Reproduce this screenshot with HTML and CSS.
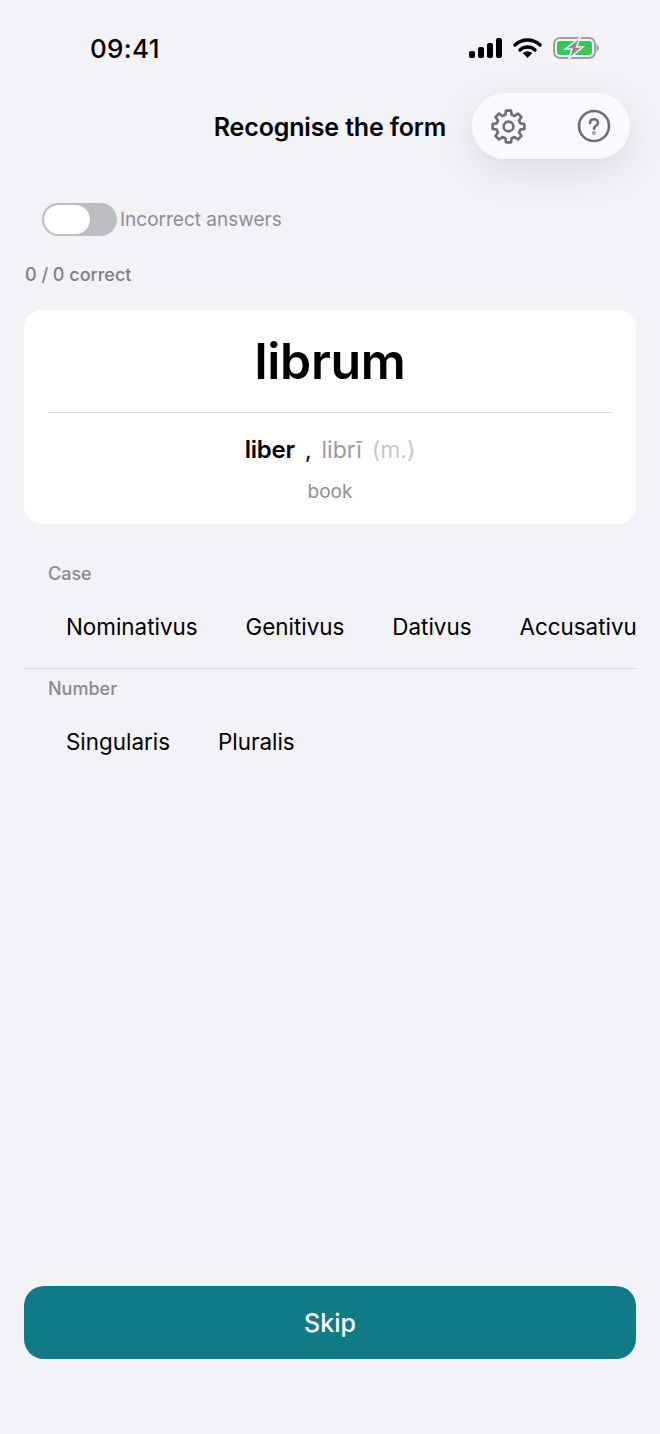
FILE: index.html
```html
<!DOCTYPE html>
<html>
<head>
	<title>Recognise the form</title>
	<meta charset=utf-8>
	<link rel="stylesheet" href="styles.css">
</head>
<body>
	<div class="status">
		<span class="clock">09:41</span>
		<div class="status-icons">
			<svg width="33" height="20" viewBox="0 0 33 20">
				<rect x="0" y="13" width="6" height="7" rx="2" fill="#000"/>
				<rect x="9" y="9" width="6" height="11" rx="2" fill="#000"/>
				<rect x="18" y="5" width="6" height="15" rx="2" fill="#000"/>
				<rect x="27" y="0" width="6" height="20" rx="2" fill="#000"/>
			</svg>
			<svg width="29" height="20" viewBox="0 0 29 20">
				<path d="M2 7 A18 18 0 0 1 27 7" fill="none" stroke="#000" stroke-width="3.400" stroke-linecap="round"/>
				<path d="M7 12 A11 11 0 0 1 22 12" fill="none" stroke="#000" stroke-width="3.400" stroke-linecap="round"/>
				<path d="M9.800 15 A7 7 0 0 1 19.200 15 L14.500 20 Z" fill="#000"/>
			</svg>
			<svg width="46" height="22" viewBox="0 0 46 22">
				<rect x="1" y="1" width="41" height="20" rx="6" fill="none" stroke="#a0a0a4" stroke-width="2"/>
				<rect x="4" y="4" width="35" height="14" rx="3" fill="#34c759"/>
				<path d="M43.500 7.500 C45 8 46 9.500 46 11 C46 12.500 45 14 43.500 14.500 Z" fill="#a0a0a4"/>
				<path d="M27 .5 L12.500 12 H19 L16 21.500 L30 10 H23.500 Z" fill="#8e8e93" stroke="#f2f2f7" stroke-width="1.500"/>
			</svg>
		</div>
	</div>

	<div class="top">
		<h1>Recognise the form</h1>
		<div class="actions">
			<svg class="gear" width="35" height="35" viewBox="-18 -18 36 36" fill="none" stroke="#6e6e73" stroke-width="2.700" stroke-linejoin="round">
				<path d="M-3.24-12.07L-2.58-16.3L2.58-16.3L3.24-12.07L6.25-10.83L9.7-13.35L13.35-9.7L10.83-6.25L12.07-3.24L16.3-2.58L16.3 2.58L12.07 3.24L10.83 6.25L13.35 9.7L9.7 13.35L6.25 10.83L3.24 12.07L2.58 16.3L-2.58 16.3L-3.24 12.07L-6.25 10.83L-9.7 13.35L-13.35 9.7L-10.83 6.25L-12.07 3.24L-16.3 2.58L-16.3-2.58L-12.07-3.24L-10.83-6.25L-13.35-9.7L-9.7-13.35L-6.25-10.83Z"/>
				<circle r="5"/>
			</svg>
			<svg width="36" height="36" viewBox="0 0 36 36" fill="none" stroke="#6e6e73" stroke-width="2.600" stroke-linecap="round">
				<circle cx="18" cy="18" r="15"/>
				<path d="M14 15c0-2.400 1.800-3.800 4-3.800s4 1.400 4 3.600c0 3-4 3-4 6"/>
				<circle cx="18" cy="25" r=".5"/>
			</svg>
		</div>
	</div>

	<label class="toggle-row">
		<span class="toggle"><span class="knob"></span></span>
		<span class="toggle-label">Incorrect answers</span>
	</label>

	<div class="tally">0 / 0 correct</div>

	<div class="card">
		<div class="word">librum</div>
		<div class="lemma">
			<b>liber</b><span class="comma">,</span><span class="gen">librī</span><span class="gender">(m.)</span>
		</div>
		<div class="meaning">book</div>
	</div>

	<section class="group group-line">
		<div class="group-title">Case</div>
		<div class="options">
			<span>Nominativus</span>
			<span>Genitivus</span>
			<span>Dativus</span>
			<span>Accusativus</span>
		</div>
	</section>
	<section class="group">
		<div class="group-title">Number</div>
		<div class="options">
			<span>Singularis</span>
			<span>Pluralis</span>
		</div>
	</section>

	<button class="skip">Skip</button>
</body>
</html>
```

FILE: styles.css
```css
html, body {
	height: 100%;
}
body {
	margin: 0;
	height: 1434px;
	box-sizing: border-box;
	display: flex;
	flex-direction: column;
	overflow: hidden;
	background: #f2f2f7;
	color: #000;
	font-family: Inter, "Liberation Sans", sans-serif;
}

/* status bar */
.status {
	height: 94px;
	flex: none;
	display: flex;
	justify-content: space-between;
	align-items: flex-start;
	padding: 33px 61px 0 90px;
	box-sizing: border-box;
}
.clock {
	font-size: 26px;
	line-height: 31px;
	font-weight: 550;
	letter-spacing: .3px;
}
.status-icons {
	display: flex;
	align-items: center;
	gap: 11px;
	padding-top: 4px;
}

/* title row */
.top {
	position: relative;
	height: 66px;
	flex: none;
	display: flex;
	align-items: center;
	justify-content: center;
}
h1 {
	margin: 0;
	font-size: 25px;
	font-weight: 575;
	letter-spacing: -.15px;
}
.actions {
	position: absolute;
	left: 472px;
	top: -1px;
	width: 158px;
	height: 66px;
	box-sizing: border-box;
	padding: 0 18px 0 19px;
	display: flex;
	align-items: center;
	justify-content: space-between;
	border-radius: 33px;
	background: #f9f9fe;
	box-shadow: 0 12px 40px rgba(0, 0, 0, .1);
}

/* toggle */
.toggle-row {
	display: flex;
	align-items: center;
	gap: 3px;
	margin: 43px 0 0 42px;
}
.toggle {
	width: 75px;
	height: 33px;
	box-sizing: border-box;
	display: block;
	padding: 2px;
	border-radius: 17px;
	background: #bdbdc2;
}
.knob {
	display: block;
	width: 46px;
	height: 29px;
	border-radius: 15px;
	background: #fff;
}
.toggle-label {
	font-size: 19px;
	color: #8e8e93;
}

.tally {
	margin: 27px 0 0 25px;
	font-size: 18px;
	line-height: 24px;
	font-weight: 500;
	color: #7f7f84;
}

/* word card */
.card {
	margin: 23px 24px 0;
	height: 214px;
	flex: none;
	box-sizing: border-box;
	padding: 0 24px;
	border-radius: 18px;
	background: #fff;
	text-align: center;
}
.word {
	height: 103px;
	box-sizing: border-box;
	padding-top: 20px;
	border-bottom: 1px solid #dcdcde;
	font-size: 50px;
	line-height: 63px;
	font-weight: 600;
	letter-spacing: -.35px;
}
.lemma {
	margin-top: 22px;
	display: flex;
	justify-content: center;
	align-items: baseline;
	font-size: 23px;
	line-height: 30px;
}
.lemma b {
	font-weight: 600;
	font-size: 24px;
	letter-spacing: -.2px;
}
.comma {
	margin-left: 10px;
}
.gen {
	margin-left: 10px;
	color: #9b9b9f;
}
.gender {
	margin-left: 10px;
	color: #c7c7cc;
}
.meaning {
	margin-top: 15px;
	font-size: 19px;
	line-height: 24px;
	color: #8e8e93;
}

/* answer groups */
.group {
	margin: 0 24px;
	overflow: hidden;
}
.card + .group {
	margin-top: 38px;
}
.group-line {
	border-bottom: 1px solid #d8d8dc;
}
.group-title {
	padding-left: 24px;
	font-size: 18px;
	line-height: 24px;
	font-weight: 500;
	color: #8a8a8e;
}
.options {
	display: flex;
	gap: 48px;
	padding: 26px 0 0 42px;
	height: 82px;
	box-sizing: border-box;
	font-size: 22.400px;
	line-height: 29px;
	white-space: nowrap;
}
.group-line + .group {
	padding-top: 8px;
}

.skip {
	margin: auto 24px 75px;
	height: 73px;
	flex: none;
	border: 0;
	border-radius: 20px;
	background: #107a86;
	color: #fff;
	font-family: inherit;
	font-size: 25px;
	font-weight: 550;
}
```
